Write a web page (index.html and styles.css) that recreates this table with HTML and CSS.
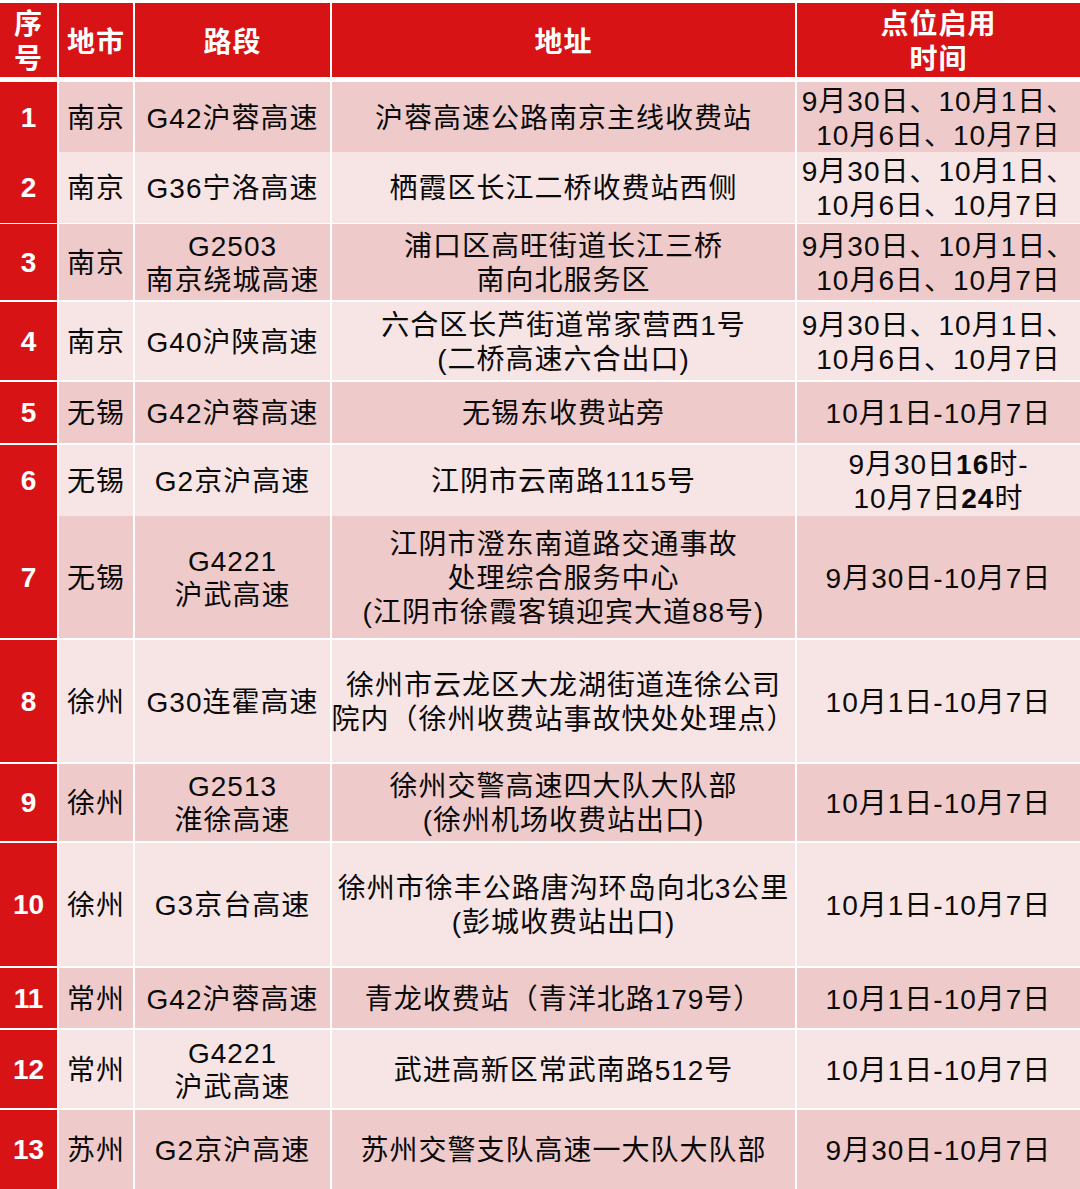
FILE: index.html
```html
<!DOCTYPE html>
<html lang="zh-CN">
<head>
<meta charset="utf-8">
<title>点位表</title>
<link rel="stylesheet" href="styles.css">
</head>
<body>
<div class="tbl">
  <div class="row head">
    <div class="cell">序<br>号</div>
    <div class="cell">地市</div>
    <div class="cell">路段</div>
    <div class="cell">地址</div>
    <div class="cell">点位启用<br>时间</div>
  </div>

  <div class="row odd h68">
    <div class="cell num">1</div>
    <div class="cell">南京</div>
    <div class="cell">G42沪蓉高速</div>
    <div class="cell">沪蓉高速公路南京主线收费站</div>
    <div class="cell">9月30日、10月1日、<br>10月6日、10月7日</div>
  </div>

  <div class="row even h70">
    <div class="cell num">2</div>
    <div class="cell">南京</div>
    <div class="cell">G36宁洛高速</div>
    <div class="cell">栖霞区长江二桥收费站西侧</div>
    <div class="cell">9月30日、10月1日、<br>10月6日、10月7日</div>
  </div>

  <div class="row odd h76">
    <div class="cell num">3</div>
    <div class="cell">南京</div>
    <div class="cell">G2503<br>南京绕城高速</div>
    <div class="cell">浦口区高旺街道长江三桥<br>南向北服务区</div>
    <div class="cell">9月30日、10月1日、<br>10月6日、10月7日</div>
  </div>

  <div class="row even h78">
    <div class="cell num">4</div>
    <div class="cell">南京</div>
    <div class="cell">G40沪陕高速</div>
    <div class="cell">六合区长芦街道常家营西1号<br>(二桥高速六合出口)</div>
    <div class="cell">9月30日、10月1日、<br>10月6日、10月7日</div>
  </div>

  <div class="row odd h61">
    <div class="cell num">5</div>
    <div class="cell">无锡</div>
    <div class="cell">G42沪蓉高速</div>
    <div class="cell">无锡东收费站旁</div>
    <div class="cell">10月1日-10月7日</div>
  </div>

  <div class="row even h69">
    <div class="cell num">6</div>
    <div class="cell">无锡</div>
    <div class="cell">G2京沪高速</div>
    <div class="cell">江阴市云南路1115号</div>
    <div class="cell"><span>9月30日<b>16</b>时-<br>10月7日<b>24</b>时</span></div>
  </div>

  <div class="row odd h122">
    <div class="cell num">7</div>
    <div class="cell">无锡</div>
    <div class="cell">G4221<br>沪武高速</div>
    <div class="cell">江阴市澄东南道路交通事故<br>处理综合服务中心<br>(江阴市徐霞客镇迎宾大道88号)</div>
    <div class="cell">9月30日-10月7日</div>
  </div>

  <div class="row even h122">
    <div class="cell num">8</div>
    <div class="cell">徐州</div>
    <div class="cell">G30连霍高速</div>
    <div class="cell">徐州市云龙区大龙湖街道连徐公司<br>院内（徐州收费站事故快处处理点）</div>
    <div class="cell">10月1日-10月7日</div>
  </div>

  <div class="row odd h77">
    <div class="cell num">9</div>
    <div class="cell">徐州</div>
    <div class="cell">G2513<br>淮徐高速</div>
    <div class="cell">徐州交警高速四大队大队部<br>(徐州机场收费站出口)</div>
    <div class="cell">10月1日-10月7日</div>
  </div>

  <div class="row even h123">
    <div class="cell num">10</div>
    <div class="cell">徐州</div>
    <div class="cell">G3京台高速</div>
    <div class="cell">徐州市徐丰公路唐沟环岛向北3公里<br>(彭城收费站出口)</div>
    <div class="cell">10月1日-10月7日</div>
  </div>

  <div class="row odd h60">
    <div class="cell num">11</div>
    <div class="cell">常州</div>
    <div class="cell">G42沪蓉高速</div>
    <div class="cell">青龙收费站（青洋北路179号）</div>
    <div class="cell">10月1日-10月7日</div>
  </div>

  <div class="row even h78">
    <div class="cell num">12</div>
    <div class="cell">常州</div>
    <div class="cell">G4221<br>沪武高速</div>
    <div class="cell">武进高新区常武南路512号</div>
    <div class="cell">10月1日-10月7日</div>
  </div>

  <div class="row odd h79">
    <div class="cell num">13</div>
    <div class="cell">苏州</div>
    <div class="cell">G2京沪高速</div>
    <div class="cell">苏州交警支队高速一大队大队部</div>
    <div class="cell">9月30日-10月7日</div>
  </div>
</div>
</body>
</html>
```

FILE: styles.css
```css
html, body {
  margin: 0;
  padding: 0;
  background: #ffffff;
}

body {
  width: 1080px;
  height: 1189px;
  overflow: hidden;
  font-family: "Liberation Sans", "Noto Sans CJK SC", sans-serif;
  font-size: 28px;
  color: #0a0a0a;
}

.tbl {
  padding-top: 3px;
  display: flex;
  flex-direction: column;
  gap: 2px;
}

.row {
  display: grid;
  grid-template-columns: 57px 74px 195px 463px 283px;
  column-gap: 2px;
}

.cell {
  display: flex;
  align-items: center;
  justify-content: center;
  text-align: center;
  line-height: 34px;
  letter-spacing: 1px;
  white-space: nowrap;
  padding-top: 3px;
  box-sizing: border-box;
}

.row.head {
  height: 73px;
  margin-bottom: 4px;
}

.row.head .cell {
  background: #d81316;
  color: #ffffff;
  font-family: "Liberation Sans", "Noto Sans CJK SC", sans-serif;
  font-weight: 700;
  font-size: 28px;
  line-height: 35px;
  padding-top: 4px;
}

.row.odd .cell {
  background: #efcacb;
}

.row.even .cell {
  background: #f7e5e6;
}

.row .cell.num {
  background: #d81316;
  color: #ffffff;
  font-weight: 700;
  letter-spacing: 0;
  padding-top: 1px;
}

.cell b {
  font-weight: 700;
}

.h60 { height: 60px; }
.h61 { height: 61px; }
.h68 { height: 68px; }
.h69 { height: 69px; }
.h70 { height: 70px; }
.h76 { height: 76px; }
.h77 { height: 77px; }
.h78 { height: 78px; }
.h79 { height: 79px; }
.h122 { height: 122px; }
.h123 { height: 123px; }
```
